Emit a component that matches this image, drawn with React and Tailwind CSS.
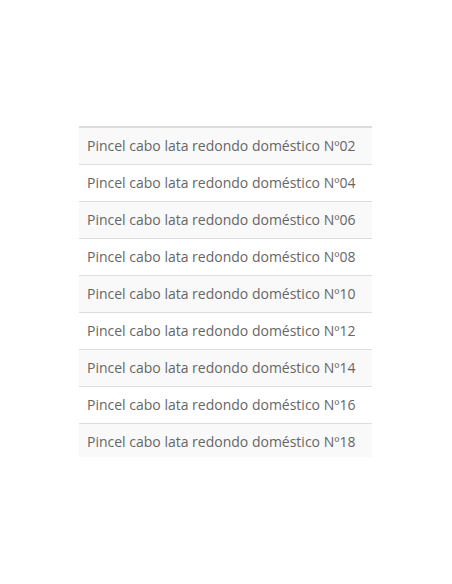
import React from 'react'

const items = ['02', '04', '06', '08', '10', '12', '14', '16', '18']

function App() {
    return (
        <div className="w-[452px] h-[584px] bg-white pt-[126px] pl-[79px]" style={{ fontFamily: '"Open Sans", sans-serif' }}>
            {/* Product list */}
            <div className="w-[293px] h-[331px] overflow-hidden border-t-2 border-[#dddddd]">
                <table className="w-full border-collapse">
                    <tbody>
                        {items.map((n, i) => (
                            <tr key={n} className={i % 2 === 0 ? 'bg-[#f9f9f9]' : 'bg-white'}>
                                <td className={`px-2 py-2 text-[14px] leading-5 text-[#666666] ${i === 0 ? '' : 'border-t border-[#dddddd]'}`}>
                                    Pincel cabo lata redondo doméstico Nº{n}
                                </td>
                            </tr>
                        ))}
                    </tbody>
                </table>
            </div>
        </div>
    );
}

export default App
